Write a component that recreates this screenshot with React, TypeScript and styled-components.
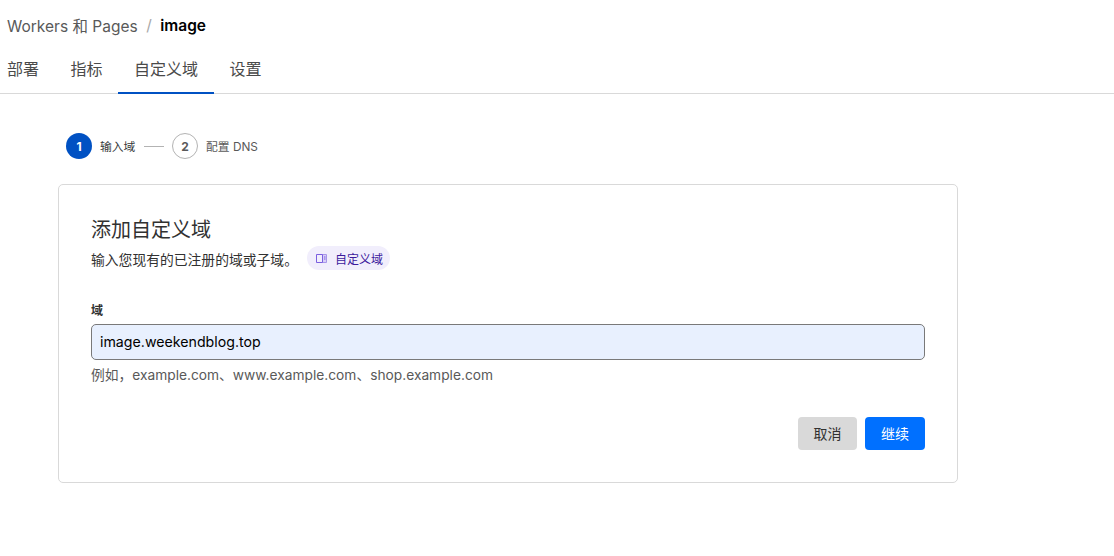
import React from 'react';
import styled, { createGlobalStyle } from 'styled-components';

const Global = createGlobalStyle`
  html, body {
    margin: 0;
    padding: 0;
    background: #fff;
    font-family: Inter, "Noto Sans CJK SC", sans-serif;
  }
  * { box-sizing: border-box; }
`;

const Page = styled.div`
  width: 1114px;
  height: 556px;
  overflow: hidden;
`;

const Header = styled.header`
  height: 94px;
  border-bottom: 1px solid #d9d9d9;
  padding-left: 7px;
`;

const Crumbs = styled.div`
  display: flex;
  align-items: center;
  height: 50px;
  font-size: 15.5px;
  color: #595959;
`;

const CrumbSep = styled.span`
  margin: 0 8.5px;
  color: #a8a8a8;
`;

const CrumbCurrent = styled.span`
  font-weight: 600;
  color: #000;
`;

const Tabs = styled.nav`
  display: flex;
  height: 44px;
`;

const Tab = styled.div<{ $active?: boolean }>`
  font-size: 16px;
  color: #4a4a4a;
  line-height: 38px;
  margin-right: 31.5px;
  ${p => p.$active && `
    margin-left: -16px;
    margin-right: 15.5px;
    padding: 0 16px;
    border-bottom: 2px solid #0051c3;
  `}
`;

const Main = styled.main`
  padding: 39px 0 0 58px;
`;

const Steps = styled.div`
  display: flex;
  align-items: center;
  height: 26px;
  padding-left: 8px;
`;

const StepDot = styled.div<{ $active?: boolean }>`
  width: 26px;
  height: 26px;
  border-radius: 50%;
  display: flex;
  align-items: center;
  justify-content: center;
  font-size: 12px;
  font-weight: 700;
  color: ${p => (p.$active ? '#fff' : '#595959')};
  background: ${p => (p.$active ? '#0051c3' : '#fff')};
  border: ${p => (p.$active ? 'none' : '1px solid #b3b3b3')};
`;

const StepLabel = styled.span<{ $active?: boolean }>`
  font-size: 11.8px;
  margin: -2px 0 0 8px;
  color: ${p => (p.$active ? '#36393a' : '#595959')};
`;

const StepLine = styled.div`
  width: 20px;
  height: 1px;
  background: #b3b3b3;
  margin: 0 8px 0 8.6px;
`;

const Card = styled.section`
  width: 900px;
  height: 299px;
  margin-top: 25px;
  border: 1px solid #d9d9d9;
  border-radius: 5px;
  padding: 32px;
`;

const Title = styled.h2`
  margin: 0;
  font-size: 20px;
  font-weight: 400;
  line-height: 26px;
  color: #313131;
`;

const SubRow = styled.div`
  display: flex;
  align-items: center;
  margin-top: 3px;
  height: 24px;
`;

const SubText = styled.span`
  font-size: 13.8px;
  margin-top: 2px;
  color: #313131;
`;

const DocsPill = styled.div`
  display: flex;
  align-items: center;
  gap: 8px;
  height: 24px;
  margin-left: 9px;
  padding: 0 7px 0 9px;
  border-radius: 12px;
  background: #f1eefc;
  font-size: 12px;
  color: #3c1a9c;
`;

const FieldLabel = styled.label`
  display: block;
  margin-top: 33px;
  font-size: 12px;
  font-weight: 600;
  line-height: 16px;
  color: #313131;
`;

const Input = styled.div`
  height: 36px;
  margin-top: 5px;
  width: 834px;
  padding: 0 8px 2px;
  display: flex;
  align-items: center;
  background: #e8f0fe;
  border: 1px solid #797979;
  border-radius: 5px;
  font-size: 14.2px;
  color: #000;
`;

const Hint = styled.p`
  margin: 5px 0 0;
  font-size: 13.75px;
  line-height: 20px;
  color: #595959;
`;

const Actions = styled.div`
  display: flex;
  justify-content: flex-end;
  gap: 8px;
  width: 834px;
  margin-top: 32px;
`;

const Button = styled.button<{ $primary?: boolean }>`
  width: ${p => (p.$primary ? '60px' : '59px')};
  height: 33px;
  padding: 0 0 2px;
  border: none;
  border-radius: 4px;
  font-family: inherit;
  font-size: 14px;
  color: ${p => (p.$primary ? '#fff' : '#313131')};
  background: ${p => (p.$primary ? '#0070ff' : '#d9d9d9')};
`;

const BookIcon = () => (
  <svg width="11" height="11" viewBox="0 0 11 11" fill="none" stroke="#7b5fe0" strokeWidth="1">
    <path d="M6.5 1.5h4v8h-4" fill="#d8cff6" stroke="#a896ea" />
    <path d="M0.5 1.5h6v8h-6z" />
    <path d="M8 4h1.5M8 6h1.5" stroke="#7b5fe0" />
  </svg>
);

const App = () => (
  <Page>
    <Global />
    <Header>
      <Crumbs>
        Workers 和 Pages
        <CrumbSep>/</CrumbSep>
        <CrumbCurrent>image</CrumbCurrent>
      </Crumbs>
      <Tabs>
        <Tab>部署</Tab>
        <Tab>指标</Tab>
        <Tab $active>自定义域</Tab>
        <Tab>设置</Tab>
      </Tabs>
    </Header>
    <Main>
      <Steps>
        <StepDot $active>1</StepDot>
        <StepLabel $active>输入域</StepLabel>
        <StepLine />
        <StepDot>2</StepDot>
        <StepLabel>配置 DNS</StepLabel>
      </Steps>
      <Card>
        <Title>添加自定义域</Title>
        <SubRow>
          <SubText>输入您现有的已注册的域或子域。</SubText>
          <DocsPill>
            <BookIcon />
            自定义域
          </DocsPill>
        </SubRow>
        <FieldLabel>域</FieldLabel>
        <Input>image.weekendblog.top</Input>
        <Hint>例如，example.com、www.example.com、shop.example.com</Hint>
        <Actions>
          <Button>取消</Button>
          <Button $primary>继续</Button>
        </Actions>
      </Card>
    </Main>
  </Page>
);

export default App;
